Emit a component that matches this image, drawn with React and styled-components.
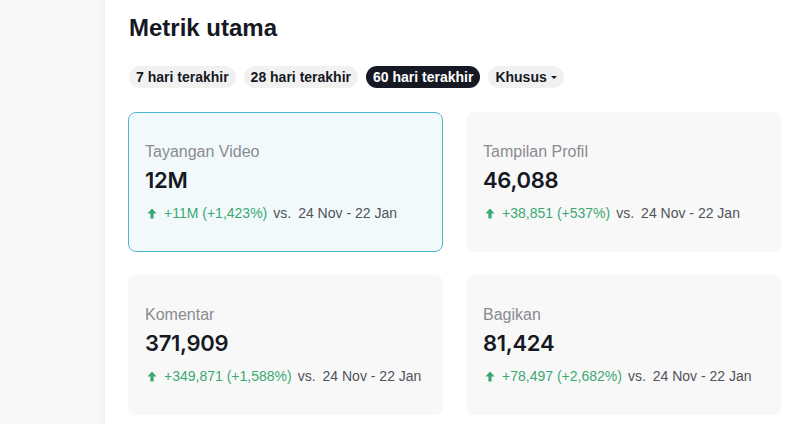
import React from 'react'
import styled, { createGlobalStyle } from 'styled-components'

const GlobalStyle = createGlobalStyle`
  html, body {
    margin: 0;
    padding: 0;
    background: #ffffff;
  }

  body {
    font-family: 'Liberation Sans', Arial, sans-serif;
    color: #161823;
  }
`

const Layout = styled.div`
  display: flex;
  width: 800px;
  height: 424px;
  overflow: hidden;
`

const Sidebar = styled.aside`
  width: 105px;
  flex-shrink: 0;

  background-color: #f8f8f8;
`

const Main = styled.main`
  flex: 1;
  padding: 12px 19px 0 23px;

  background-color: #ffffff;
  box-shadow: -3px 0 6px rgba(0, 0, 0, 0.035);
  z-index: 1;
`

const Title = styled.h2`
  margin: 0 0 0 1px;

  font-size: 24px;
  line-height: 32px;
  font-weight: 700;
  color: #161823;
`

const ChipRow = styled.div`
  display: flex;
  align-items: center;
  gap: 8px;

  margin: 22px 0 24px 1px;
`

const Chip = styled.button`
  display: flex;
  align-items: center;
  gap: 4px;

  height: 22px;
  padding: 0 7px;

  border: none;
  border-radius: 11px;
  background-color: ${(p) => (p.$active ? '#161823' : '#f1f1f2')};
  color: ${(p) => (p.$active ? '#ffffff' : '#161823')};

  font-family: 'Liberation Sans', Arial, sans-serif;
  font-size: 14px;
  font-weight: 700;
  white-space: nowrap;
`

const Caret = styled.span`
  width: 0;
  height: 0;
  margin-top: 1px;

  border-left: 3px solid transparent;
  border-right: 3px solid transparent;
  border-top: 3px solid #161823;
`

const CardGrid = styled.div`
  display: grid;
  grid-template-columns: 315px 315px;
  grid-auto-rows: 140px;
  column-gap: 23px;
  row-gap: 23px;
`

const Card = styled.div`
  display: flex;
  flex-direction: column;
  justify-content: center;

  padding: 0 16px;

  border: 1px solid ${(p) => (p.$selected ? '#4fb6d0' : 'transparent')};
  border-radius: 8px;
  background-color: ${(p) => (p.$selected ? '#f2f9fb' : '#f8f8f8')};
  box-sizing: border-box;
`

const Label = styled.div`
  font-size: 16px;
  line-height: 20px;
  color: #8a8b91;
`

const Value = styled.div`
  margin-top: 4px;

  font-family: Inter, 'Liberation Sans', sans-serif;
  font-size: 22px;
  line-height: 28px;
  font-weight: 600;
  letter-spacing: -0.3px;
  color: #161823;
`

const Change = styled.div`
  display: flex;
  align-items: center;

  margin-top: 10px;

  font-size: 14px;
  line-height: 18px;

  > svg {
    margin: 0 7px 0 2px;
  }
`

const Delta = styled.span`
  color: #3aa873;
`

const Versus = styled.span`
  margin-left: 6px;
  color: #51525a;
`

const Period = styled.span`
  margin-left: 7px;
  color: #51525a;
`

function UpArrow() {
  return (
    <svg width="10" height="11" viewBox="0 0 10 11">
      <path d="M5 0.5 L9.5 5.5 H6.6 V10.5 H3.4 V5.5 H0.5 Z" fill="#3aa873" />
    </svg>
  )
}

const metrics = [
  { label: 'Tayangan Video', value: '12M', delta: '+11M (+1,423%)', selected: true },
  { label: 'Tampilan Profil', value: '46,088', delta: '+38,851 (+537%)' },
  { label: 'Komentar', value: '371,909', delta: '+349,871 (+1,588%)' },
  { label: 'Bagikan', value: '81,424', delta: '+78,497 (+2,682%)' },
]

const ranges = ['7 hari terakhir', '28 hari terakhir', '60 hari terakhir']

export default function App() {
  return (
    <>
      <GlobalStyle />
      <Layout>
        <Sidebar />
        <Main>
          <Title>Metrik utama</Title>
          <ChipRow>
            {ranges.map((r) => (
              <Chip key={r} $active={r === '60 hari terakhir'}>
                {r}
              </Chip>
            ))}
            <Chip>
              Khusus <Caret />
            </Chip>
          </ChipRow>
          <CardGrid>
            {metrics.map((m) => (
              <Card key={m.label} $selected={m.selected}>
                <Label>{m.label}</Label>
                <Value>{m.value}</Value>
                <Change>
                  <UpArrow />
                  <Delta>{m.delta}</Delta>
                  <Versus>vs.</Versus>
                  <Period>24 Nov - 22 Jan</Period>
                </Change>
              </Card>
            ))}
          </CardGrid>
        </Main>
      </Layout>
    </>
  )
}
